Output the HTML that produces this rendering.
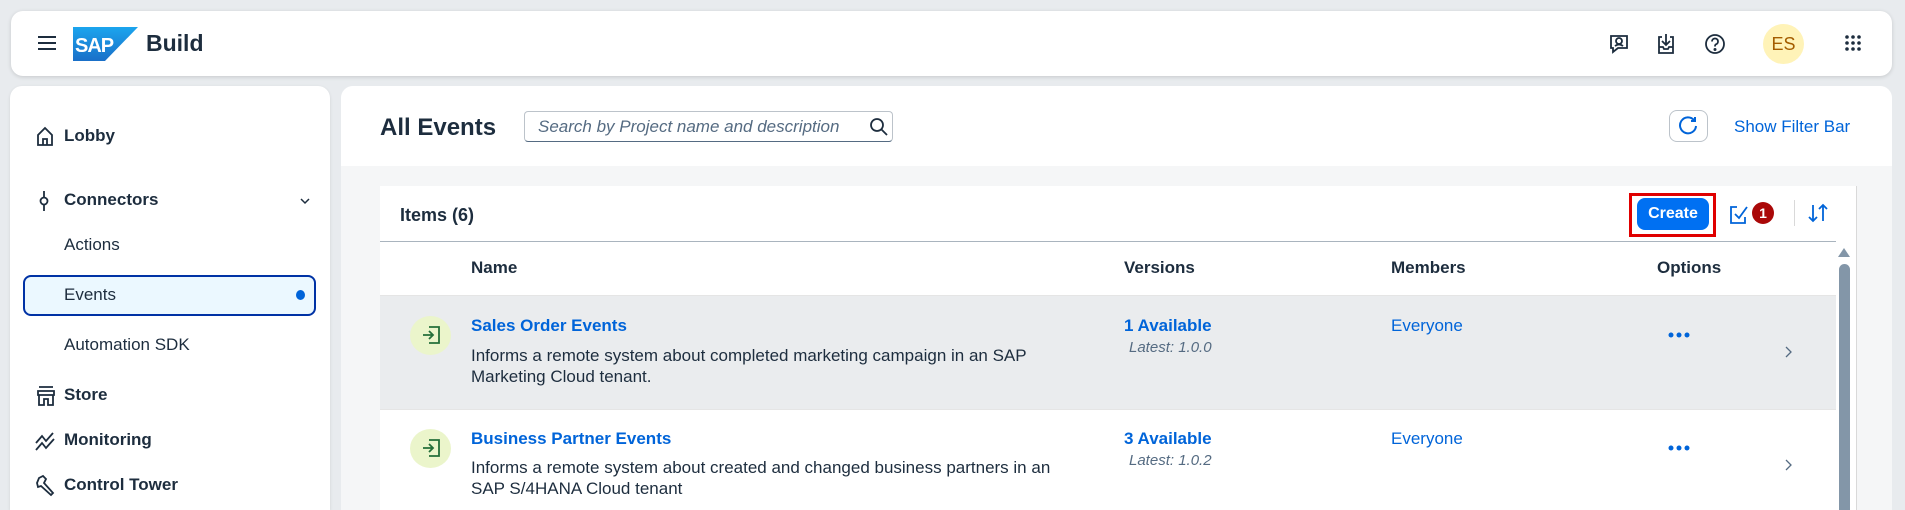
<!DOCTYPE html>
<html><head><meta charset="utf-8"><style>
*{box-sizing:border-box;margin:0;padding:0}
html,body{width:1905px;height:510px;overflow:hidden}
body{background:#e8ebee;font-family:"Liberation Sans",Arial,sans-serif;color:#1d2d3e;position:relative}
.abs{position:absolute}
.top{left:11px;top:11px;width:1881px;height:65px;background:#fff;border-radius:12px;box-shadow:0 1px 4px rgba(0,0,0,.15)}
.side{left:10px;top:86px;width:320px;height:424px;background:#fff;border-radius:12px 12px 0 0;box-shadow:0 1px 3px rgba(0,0,0,.1)}
.main{left:341px;top:86px;width:1551px;height:424px;background:#f5f6f7;border-radius:12px 12px 0 0;overflow:hidden}
.nav{position:absolute;font-size:17px;display:flex;align-items:center}
.nav b{font-weight:bold}
.link{color:#0064d9}
.row{position:absolute;left:0;width:1456px}
</style></head><body>
<div class="abs top">
  <svg class="abs" style="left:26px;top:24px" width="20" height="16" viewBox="0 0 20 16"><path d="M1 2h18M1 8h18M1 14h18" stroke="#1d2d3e" stroke-width="2"/></svg>
  <svg class="abs" style="left:62px;top:16px" width="65" height="34" viewBox="0 0 65 34"><defs><linearGradient id="g" x1="0" y1="0" x2="0" y2="1"><stop offset="0" stop-color="#1ba5ee"/><stop offset="1" stop-color="#1a6fc8"/></linearGradient></defs><path d="M0 0h65L32 34H0z" fill="url(#g)"/><text x="2" y="25" font-family="Liberation Sans" font-weight="bold" font-size="20" fill="#fff" letter-spacing="-1">SAP</text></svg>
  <div class="abs" style="left:135px;top:19px;font-size:23px;font-weight:bold">Build</div>
  <svg class="abs" style="left:1597px;top:22px" width="22" height="22" viewBox="0 0 22 22" fill="none" stroke="#1d2d3e" stroke-width="1.8"><path d="M3 3h16v12h-9l-5 4v-4H3z"/><circle cx="11" cy="8" r="3"/><path d="M7 13q4-3 8 0"/></svg>
  <svg class="abs" style="left:1645px;top:21px" width="20" height="24" viewBox="0 0 20 24" fill="none" stroke="#1d2d3e" stroke-width="1.8"><path d="M6 5H3v16h14V5h-3M10 2v11M6 9l4 4 4-4M3 15h4l1 2h4l1-2h4"/></svg>
  <svg class="abs" style="left:1693px;top:22px" width="22" height="22" viewBox="0 0 22 22" fill="none" stroke="#1d2d3e" stroke-width="1.8"><circle cx="11" cy="11" r="9"/><path d="M8 8.5a3 3 0 1 1 4 2.8c-1 .4-1 1-1 2.2"/><circle cx="11" cy="16.5" r=".6" fill="#1d2d3e"/></svg>
  <div class="abs" style="left:1752px;top:13px;width:41px;height:40px;border-radius:50%;background:#fff3b8;color:#a45d00;font-size:18px;text-align:center;line-height:40px">ES</div>
  <svg class="abs" style="left:1833px;top:23px" width="18" height="18" viewBox="0 0 18 18" fill="#1d2d3e"><circle cx="3" cy="3" r="1.8"/><circle cx="9" cy="3" r="1.8"/><circle cx="15" cy="3" r="1.8"/><circle cx="3" cy="9" r="1.8"/><circle cx="9" cy="9" r="1.8"/><circle cx="15" cy="9" r="1.8"/><circle cx="3" cy="15" r="1.8"/><circle cx="9" cy="15" r="1.8"/><circle cx="15" cy="15" r="1.8"/></svg>
</div>

<div class="abs side">
  <svg class="abs" style="left:26px;top:40px" width="18" height="20" viewBox="0 0 18 20" fill="none" stroke="#1d2d3e" stroke-width="1.8"><path d="M2 9L9 2l7 7v10H2zM7 19v-6h4v6"/></svg>
  <div class="nav" style="left:54px;top:40px"><b>Lobby</b></div>
  <svg class="abs" style="left:28px;top:103px" width="12" height="24" viewBox="0 0 12 24" fill="none" stroke="#1d2d3e" stroke-width="1.8"><circle cx="6" cy="12" r="3.5"/><path d="M6 2v6.5M6 15.5V22"/></svg>
  <div class="nav" style="left:54px;top:104px"><b>Connectors</b></div>
  <svg class="abs" style="left:290px;top:112px" width="10" height="7" viewBox="0 0 10 7" fill="none" stroke="#1d2d3e" stroke-width="1.5"><path d="M1 1l4 4 4-4"/></svg>
  <div class="nav" style="left:54px;top:149px">Actions</div>
  <div class="abs" style="left:13px;top:189px;width:293px;height:41px;border:2px solid #0032a5;border-radius:8px;background:#ebf8ff"></div>
  <div class="nav" style="left:54px;top:199px">Events</div>
  <div class="abs" style="left:286px;top:204px;width:9px;height:10px;border-radius:50%;background:#0064d9"></div>
  <div class="nav" style="left:54px;top:249px">Automation SDK</div>
  <svg class="abs" style="left:26px;top:299px" width="20" height="22" viewBox="0 0 20 22" fill="none" stroke="#1d2d3e" stroke-width="1.8"><path d="M3 2h14M2 6h16v4H2zM3 10v10h5v-6h4v6h5V10"/></svg>
  <div class="nav" style="left:54px;top:299px"><b>Store</b></div>
  <svg class="abs" style="left:25px;top:345px" width="22" height="20" viewBox="0 0 22 20" fill="none" stroke="#1d2d3e" stroke-width="1.8"><path d="M1 12l6-7 4 5 7-8M1 19l6-7 4 5 8-9"/></svg>
  <div class="nav" style="left:54px;top:344px"><b>Monitoring</b></div>
  <svg class="abs" style="left:26px;top:388px" width="20" height="24" viewBox="0 0 20 24" fill="none" stroke="#1d2d3e" stroke-width="1.8"><path d="M3 4l4-2 3 3-2 4 9 10-2 2-10-9-3 1-1-4z"/></svg>
  <div class="nav" style="left:54px;top:389px"><b>Control Tower</b></div>
</div>

<div class="abs main">
  <div class="abs" style="left:0;top:0;width:1551px;height:80px;background:#fff"></div>
  <div class="abs" style="left:39px;top:28px;font-size:24px;font-weight:bold">All Events</div>
  <div class="abs" style="left:183px;top:25px;width:369px;height:31px;border:1px solid #bcc3ca;border-bottom:1px solid #556b82;border-radius:4px;background:#fff"></div>
  <div class="abs" style="left:197px;top:31px;font-size:17px;font-style:italic;color:#556b82">Search by Project name and description</div>
  <svg class="abs" style="left:528px;top:31px" width="20" height="20" viewBox="0 0 20 20" fill="none" stroke="#1d2d3e" stroke-width="1.8"><circle cx="8" cy="8" r="6"/><path d="M12.5 12.5L18 18"/></svg>
  <div class="abs" style="left:1328px;top:24px;width:39px;height:32px;border:1px solid #bcc3ca;border-radius:8px;background:#fff"></div>
  <svg class="abs" style="left:1336px;top:29px" width="22" height="22" viewBox="0 0 22 22" fill="none" stroke="#0064d9" stroke-width="2"><path d="M17 5a8 8 0 1 0 2 6M18 2v4h-4"/></svg>
  <div class="abs link" style="left:1393px;top:31px;font-size:17px">Show Filter Bar</div>

  <div class="abs" style="left:39px;top:100px;width:1477px;height:340px;background:#fff;border-right:1px solid #d9d9d9">
    <div class="abs" style="left:20px;top:19px;font-size:18px;font-weight:bold">Items (6)</div>
    <div class="abs" style="left:1249px;top:7px;width:87px;height:44px;border:3px solid #e00000"></div>
    <div class="abs" style="left:1257px;top:12px;width:72px;height:32px;border-radius:8px;background:#0070f2;color:#fff;font-weight:bold;font-size:16px;text-align:center;line-height:32px">Create</div>
    <svg class="abs" style="left:1349px;top:19px" width="20" height="20" viewBox="0 0 20 20" fill="none" stroke="#0064d9" stroke-width="1.8"><path d="M8 2H2v16h14v-6M6 9l4 4 8-11"/></svg>
    <div class="abs" style="left:1372px;top:16px;width:22px;height:22px;border-radius:50%;background:#aa0808;color:#fff;font-size:14px;font-weight:bold;text-align:center;line-height:22px">1</div>
    <div class="abs" style="left:1414px;top:14px;width:1px;height:26px;background:#d9d9d9"></div>
    <svg class="abs" style="left:1427px;top:16px" width="22" height="22" viewBox="0 0 22 22" fill="none" stroke="#0064d9" stroke-width="1.8"><path d="M6 3v16M2 15l4 4 4-4M16 19V3M12 7l4-4 4 4"/></svg>
    <div class="abs" style="left:0;top:55px;width:1456px;height:1px;background:#a9b4be"></div>
    <div class="row" style="top:56px;height:54px;background:#fff;font-weight:bold;font-size:17px">
      <div class="abs" style="left:91px;top:16px">Name</div>
      <div class="abs" style="left:744px;top:16px">Versions</div>
      <div class="abs" style="left:1011px;top:16px">Members</div>
      <div class="abs" style="left:1277px;top:16px">Options</div>
    </div>
    <div class="row" style="top:109px;height:1px;background:#e5e5e5"></div>
    <div class="row" style="top:110px;height:113px;background:#eaecee"></div>
    <div class="row" style="top:223px;height:1px;background:#e5e5e5"></div>
    <div class="abs" style="left:1458px;top:62px;width:0;height:0;border-left:6px solid transparent;border-right:6px solid transparent;border-bottom:9px solid #8396a8"></div>
    <div class="abs" style="left:1459px;top:78px;width:11px;height:300px;border-radius:6px;background:#8396a8"></div>

    <div class="abs" style="left:30px;top:130px;width:41px;height:39px;border-radius:50%;background:#ebf5cb"></div>
    <svg class="abs" style="left:41px;top:139px" width="20" height="20" viewBox="0 0 20 20" fill="none" stroke="#256f3a" stroke-width="1.8"><path d="M8 2h10v16H8M2 10h10M8 6l4 4-4 4"/></svg>
    <div class="abs link" style="left:91px;top:130px;font-size:17px;font-weight:bold">Sales Order Events</div>
    <div class="abs" style="left:91px;top:159px;font-size:17px;line-height:21px;width:600px">Informs a remote system about completed marketing campaign in an SAP Marketing Cloud tenant.</div>
    <div class="abs link" style="left:744px;top:130px;font-size:17px;font-weight:bold">1 Available</div>
    <div class="abs" style="left:749px;top:153px;font-size:15px;font-style:italic;color:#556b82">Latest: 1.0.0</div>
    <div class="abs link" style="left:1011px;top:130px;font-size:17px">Everyone</div>
    <svg class="abs" style="left:1288px;top:146px" width="22" height="6" viewBox="0 0 22 6" fill="#0064d9"><circle cx="3" cy="3" r="2.5"/><circle cx="11" cy="3" r="2.5"/><circle cx="19" cy="3" r="2.5"/></svg>
    <svg class="abs" style="left:1404px;top:160px" width="8" height="12" viewBox="0 0 8 12" fill="none" stroke="#556b82" stroke-width="1.3"><path d="M2 1l5 5-5 5"/></svg>

    <div class="abs" style="left:30px;top:243px;width:41px;height:39px;border-radius:50%;background:#ebf5cb"></div>
    <svg class="abs" style="left:41px;top:252px" width="20" height="20" viewBox="0 0 20 20" fill="none" stroke="#256f3a" stroke-width="1.8"><path d="M8 2h10v16H8M2 10h10M8 6l4 4-4 4"/></svg>
    <div class="abs link" style="left:91px;top:243px;font-size:17px;font-weight:bold">Business Partner Events</div>
    <div class="abs" style="left:91px;top:271px;font-size:17px;line-height:21px;width:600px">Informs a remote system about created and changed business partners in an SAP S/4HANA Cloud tenant</div>
    <div class="abs link" style="left:744px;top:243px;font-size:17px;font-weight:bold">3 Available</div>
    <div class="abs" style="left:749px;top:266px;font-size:15px;font-style:italic;color:#556b82">Latest: 1.0.2</div>
    <div class="abs link" style="left:1011px;top:243px;font-size:17px">Everyone</div>
    <svg class="abs" style="left:1288px;top:259px" width="22" height="6" viewBox="0 0 22 6" fill="#0064d9"><circle cx="3" cy="3" r="2.5"/><circle cx="11" cy="3" r="2.5"/><circle cx="19" cy="3" r="2.5"/></svg>
    <svg class="abs" style="left:1404px;top:273px" width="8" height="12" viewBox="0 0 8 12" fill="none" stroke="#556b82" stroke-width="1.3"><path d="M2 1l5 5-5 5"/></svg>
  </div>
</div>
</body></html>
